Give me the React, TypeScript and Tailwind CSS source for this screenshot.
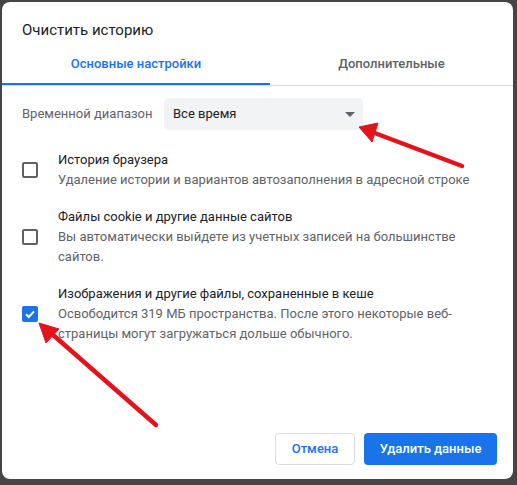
import { useState } from 'react'

type Item = { id: string; title: string; desc: string }

const items: Item[] = [
  { id: 'history', title: 'История браузера', desc: 'Удаление истории и вариантов автозаполнения в адресной строке' },
  { id: 'cookies', title: 'Файлы cookie и другие данные сайтов', desc: 'Вы автоматически выйдете из учетных записей на большинстве сайтов.' },
  { id: 'cache', title: 'Изображения и другие файлы, сохраненные в кеше', desc: 'Освободится 319 МБ пространства. После этого некоторые веб-страницы могут загружаться дольше обычного.' },
]

function Checkbox({ checked, onChange }: { checked: boolean; onChange: () => void }) {
  return (
    <button
      type="button"
      onClick={onChange}
      className={
        checked
          ? 'flex h-[16px] w-[16px] shrink-0 items-center justify-center rounded-[2px] bg-[#1a73e8]'
          : 'h-[16px] w-[16px] shrink-0 rounded-[2px] border-2 border-[#5f6368] bg-white'
      }
    >
      {checked && (
        <svg width="12" height="12" viewBox="0 0 12 12">
          <path d="M2 6.2 4.8 9 10 3.4" fill="none" stroke="white" strokeWidth="2" />
        </svg>
      )}
    </button>
  )
}

function Arrows() {
  return (
    <svg className="pointer-events-none absolute inset-0" width="517" height="485">
      <g fill="#e3131b" stroke="#e3131b">
        <line x1="462" y1="166" x2="372" y2="132" strokeWidth="4.5" strokeLinecap="round" />
        <polygon points="359,127 378,123 372,142" strokeWidth="1" strokeLinejoin="round" />
        <line x1="156" y1="425" x2="52" y2="334" strokeWidth="4.5" strokeLinecap="round" />
        <polygon points="39,323 59,329 46,343" strokeWidth="1" strokeLinejoin="round" />
      </g>
    </svg>
  )
}

export default function App() {
  const [tab, setTab] = useState(0)
  const [checked, setChecked] = useState<Record<string, boolean>>({ cache: true })

  return (
    <div className="relative h-[485px] w-[517px] bg-[#454545] pt-[2px] pr-[4px] pb-[6px] pl-[2px] font-['Roboto',sans-serif]">
      <div className="flex h-full flex-col rounded-[8px] bg-white">
        <h1 className="pl-[20px] pt-[17px] text-[15px] leading-[23px] text-[#202124]">Очистить историю</h1>

        <div className="flex border-b border-[#dadce0]">
          {['Основные настройки', 'Дополнительные'].map((label, i) => (
            <button
              key={label}
              type="button"
              onClick={() => setTab(i)}
              className={
                (i === 0 ? 'w-[268px] ' : 'flex-1 ') +
                (tab === i
                  ? 'flex h-[43px] items-center justify-center border-b-2 border-[#1a73e8] pt-[2px] text-[13px] font-medium text-[#1a73e8]'
                  : 'flex h-[43px] items-center justify-center border-b-2 border-transparent pt-[2px] text-[13px] font-medium text-[#5f6368]')
              }
            >
              {label}
            </button>
          ))}
        </div>

        <div className="mt-[12px] flex items-center pl-[20px]">
          <span className="w-[142px] text-[13px] text-[#5f6368]">Временной диапазон</span>
          <div className="flex h-[32px] w-[199px] items-center justify-between rounded-[4px] bg-[#f1f3f4] pl-[9px] pr-[8px] text-[13px] text-[#202124]">
            <span>Все время</span>
            <svg width="10" height="5" viewBox="0 0 10 5">
              <path d="M0 0h10L5 5z" fill="#5f6368" />
            </svg>
          </div>
        </div>

        <div className="mt-[20px] flex flex-col gap-[17px] pl-[20px] pr-[20px]">
          {items.map((item) => (
            <div key={item.id} className="flex items-center gap-[20px]">
              <Checkbox
                checked={!!checked[item.id]}
                onChange={() => setChecked((c) => ({ ...c, [item.id]: !c[item.id] }))}
              />
              <div className="text-[13px] leading-[20px]">
                <div className="text-[#202124]">{item.title}</div>
                <div className="text-[#5f6368]">{item.desc}</div>
              </div>
            </div>
          ))}
        </div>

        <div className="flex-1" />

        <div className="flex justify-end gap-[9px] pb-[14px] pr-[16px]">
          <button
            type="button"
            className="h-[32px] w-[80px] rounded-[4px] border border-[#dadce0] bg-white text-[13px] font-medium text-[#1a73e8]"
          >
            Отмена
          </button>
          <button
            type="button"
            className="h-[32px] w-[133px] rounded-[4px] bg-[#1a73e8] text-[13px] font-medium text-white"
          >
            Удалить данные
          </button>
        </div>
      </div>
      <Arrows />
    </div>
  )
}
